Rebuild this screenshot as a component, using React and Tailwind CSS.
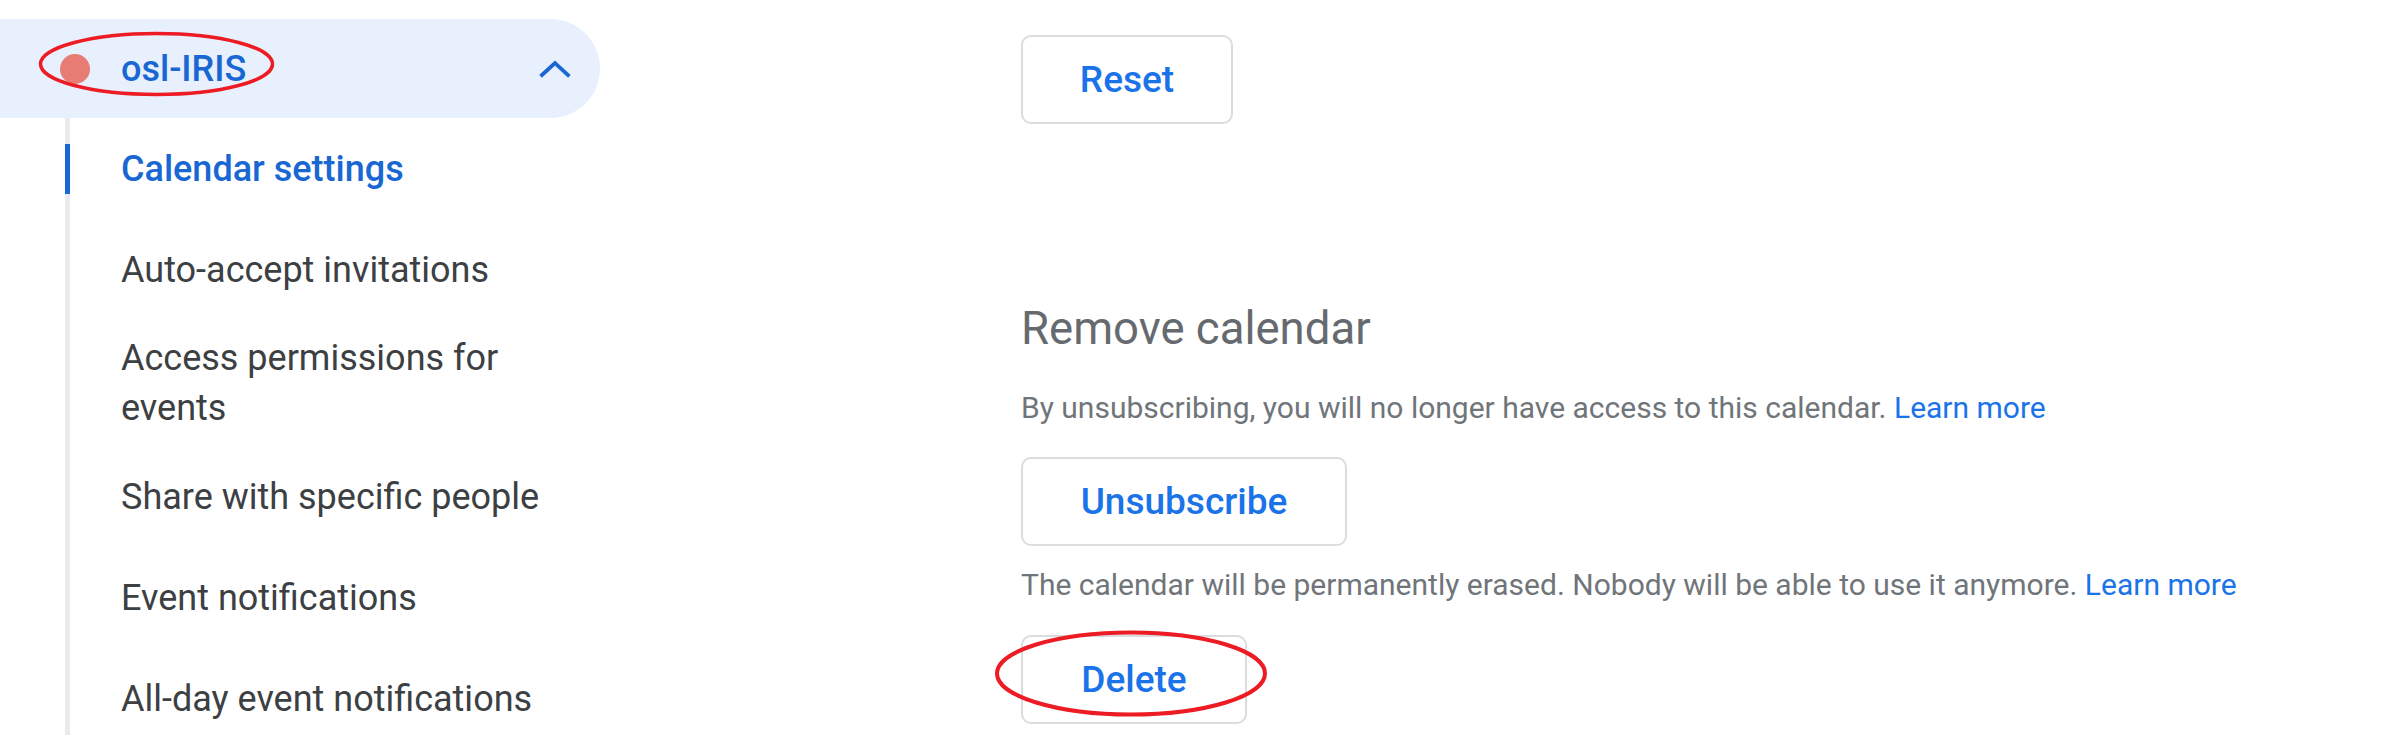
import React from 'react';

const navItems = [
    'Calendar settings',
    'Auto-accept invitations',
    'Access permissions for events',
    'Share with specific people',
    'Event notifications',
    'All-day event notifications',
];

function OutlineButton({ label, width }) {
    return (
        <button
            className={`flex h-[89px] ${width} items-center justify-center rounded-[10px] border-2 border-[#dadce0] bg-white text-[37px] font-medium leading-[50px] text-[#1a73e8]`}
        >
            {label}
        </button>
    );
}

export default function App() {
    return (
        <div className="relative flex h-[735px] w-full overflow-hidden bg-white font-['Roboto',sans-serif]">
            {/* Sidebar */}
            <div className="w-[600px] shrink-0">
                <div className="mt-[19px] flex h-[99px] w-[600px] items-center rounded-r-full bg-[#e8f0fe] pl-[60px] pr-[29px]">
                    <span className="h-[30px] w-[30px] rounded-full bg-[#e67c73]" />
                    <span className="ml-[31px] text-[36px] font-medium leading-[50px] text-[#1967d2]">osl-IRIS</span>
                    <svg className="ml-auto" width="32" height="20" viewBox="0 0 32 20" fill="none">
                        <polyline points="3,16 16,4 29,16" stroke="#1967d2" strokeWidth="3.8" strokeLinecap="square" />
                    </svg>
                </div>

                <div className="ml-[65px] border-l-[5px] border-[#e8eaed]">
                    {navItems.map((item, i) => (
                        <div
                            key={item}
                            className={`relative flex min-h-[101px] items-center py-[13px] pl-[51px] pr-[30px] text-[36px] leading-[50px] ${i === 0 ? 'font-medium text-[#1967d2]' : 'text-[#3c4043]'}`}
                        >
                            {i === 0 && <span className="absolute -left-[5px] top-[26px] h-[50px] w-[5px] bg-[#1967d2]" />}
                            {item}
                        </div>
                    ))}
                </div>
            </div>

            {/* Main content */}
            <div className="flex-1 pl-[421px] pt-[35px]">
                <OutlineButton label="Reset" width="w-[212px]" />

                <h2 className="mt-[177px] text-[45.5px] font-normal leading-[56px] text-[#666a6f]">Remove calendar</h2>

                <p className="mt-[31px] text-[30px] leading-[40px] text-[#70757a]">
                    By unsubscribing, you will no longer have access to this calendar.{' '}
                    <span className="text-[#1a73e8]">Learn more</span>
                </p>

                <div className="mt-[29px]">
                    <OutlineButton label="Unsubscribe" width="w-[326px]" />
                </div>

                <p className="mt-[19px] text-[30px] leading-[40px] text-[#70757a]">
                    The calendar will be permanently erased. Nobody will be able to use it anymore.{' '}
                    <span className="text-[#1a73e8]">Learn more</span>
                </p>

                <div className="mt-[30px]">
                    <OutlineButton label="Delete" width="w-[226px]" />
                </div>
            </div>

            {/* Red annotation marks */}
            <svg className="pointer-events-none absolute left-0 top-0" width="2397" height="735" viewBox="0 0 2397 735" fill="none">
                <ellipse cx="156.5" cy="64" rx="116" ry="30.5" stroke="#ed1c24" strokeWidth="3.5" />
                <ellipse cx="1131" cy="673.5" rx="134" ry="41" stroke="#ed1c24" strokeWidth="4" />
            </svg>
        </div>
    );
}
